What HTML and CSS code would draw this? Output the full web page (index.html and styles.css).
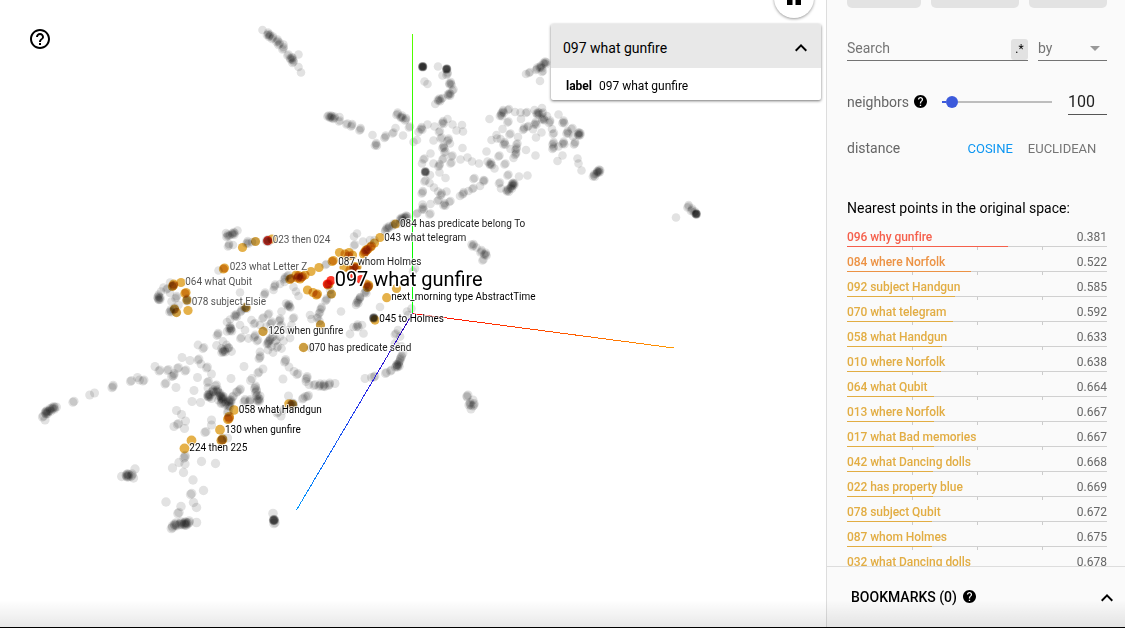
FILE: index.html
```html
<!DOCTYPE html>
<html lang="en">
<head>
<meta charset="utf-8">
<title>Embedding projector</title>
<link rel="stylesheet" href="styles.css">
</head>
<body>
<div class="app">
  <main class="stage">
    <svg class="scatter" id="scatter" width="826" height="628" viewBox="0 0 826 628">
      <defs>
        <linearGradient id="axis-y" x1="0" y1="34" x2="0" y2="313" gradientUnits="userSpaceOnUse"><stop offset="0" stop-color="#5cff00"/><stop offset=".5" stop-color="#0cf500"/><stop offset="1" stop-color="#00ff00"/></linearGradient>
        <linearGradient id="axis-x" x1="412" y1="0" x2="674" y2="0" gradientUnits="userSpaceOnUse"><stop offset="0" stop-color="#ff0000"/><stop offset="1" stop-color="#ff9800"/></linearGradient>
        <linearGradient id="axis-z" x1="0" y1="313" x2="0" y2="510" gradientUnits="userSpaceOnUse"><stop offset="0" stop-color="#3000b0"/><stop offset=".35" stop-color="#2d22e6"/><stop offset="1" stop-color="#0099ff"/></linearGradient>
      </defs>
      <g id="dots" class="dots"></g>
      <g class="axes">
        <path d="M412.5 34V313.5" stroke="url(#axis-y)"/>
        <path d="M412.5 313.5L674 348" stroke="url(#axis-x)"/>
        <path d="M412.5 313.5L296.5 510" stroke="url(#axis-z)"/>
      </g>
      <g id="labels" class="labels"></g>
    </svg>
    <svg class="help-outline" viewBox="0 0 24 24" width="24" height="24"><path d="M11 18h2v-2h-2v2zm1-16C6.48 2 2 6.48 2 12s4.48 10 10 10 10-4.48 10-10S17.52 2 12 2zm0 18c-4.41 0-8-3.59-8-8s3.590-8 8-8 8 3.590 8 8-3.590 8-8 8zm0-14c-2.210 0-4 1.790-4 4h2c0-1.100.900-2 2-2s2 .900 2 2c0 2-3 1.750-3 5h2c0-2.250 3-2.500 3-5 0-2.210-1.790-4-4-4z"/></svg>
    <div class="fab"><svg viewBox="0 0 24 24" width="24" height="24"><path d="M5 4h5.500v15H5zM13.500 4H19v15h-5.500z"/></svg></div>
    <section class="info-card">
      <header class="info-head"><span>097 what gunfire</span><svg viewBox="0 0 24 24" width="24" height="24"><path d="M12 8l-6 6 1.410 1.410L12 10.830l4.590 4.580L18 14z"/></svg></header>
      <div class="info-body"><b>label</b><span>097 what gunfire</span></div>
    </section>
  </main>
  <aside class="panel">
    <div class="content">
      <div class="buttons"><i class="btn b1"></i><i class="btn b2"></i><i class="btn b3"></i></div>
      <div class="search-row">
        <div class="search"><span class="hint">Search</span><span class="regex">.*</span></div>
        <div class="by"><span class="hint">by</span><i class="caret"></i></div>
      </div>
      <div class="neighbors">
        <span class="name">neighbors</span>
        <svg class="help" viewBox="2 2 20 20" width="13" height="13"><path d="M12 2C6.480 2 2 6.480 2 12s4.480 10 10 10 10-4.480 10-10S17.520 2 12 2zm1 17h-2v-2h2v2zm2.070-7.750l-.900.920C13.450 12.900 13 13.500 13 15h-2v-.500c0-1.100.450-2.100 1.170-2.830l1.240-1.260c.370-.360.590-.860.590-1.410 0-1.100-.900-2-2-2s-2 .900-2 2H8c0-2.210 1.790-4 4-4s4 1.790 4 4c0 .880-.360 1.680-.930 2.250z"/></svg>
        <div class="slider"><i class="filled"></i><i class="knob"></i><i class="rest"></i></div>
        <span class="count">100</span>
      </div>
      <div class="distance"><span class="name">distance</span><span class="metric on">COSINE</span><span class="metric">EUCLIDEAN</span></div>
      <h3 class="nearest">Nearest points in the original space:</h3>
      <div class="list" id="list"></div>
    </div>
    <footer class="bookmarks">
      <span>BOOKMARKS (0)</span>
      <svg class="help" viewBox="2 2 20 20" width="13" height="13"><path d="M12 2C6.480 2 2 6.480 2 12s4.480 10 10 10 10-4.480 10-10S17.520 2 12 2zm1 17h-2v-2h2v2zm2.070-7.750l-.900.920C13.450 12.900 13 13.500 13 15h-2v-.500c0-1.100.450-2.100 1.170-2.830l1.240-1.260c.370-.360.590-.860.590-1.410 0-1.100-.900-2-2-2s-2 .900-2 2H8c0-2.210 1.790-4 4-4s4 1.790 4 4c0 .880-.360 1.680-.930 2.250z"/></svg>
      <svg class="expand" viewBox="0 0 24 24" width="24" height="24"><path d="M12 8l-6 6 1.410 1.410L12 10.830l4.590 4.580L18 14z"/></svg>
    </footer>
  </aside>
  <div class="bottom-edge"></div>
</div>
<script src="script.js"></script>
</body>
</html>
```
FILE: styles.css
```css
* { box-sizing: border-box; }
body { margin: 0; font-family: Roboto, "Liberation Sans", sans-serif; color: #000; background: #fff; }
.app { position: relative; display: flex; width: 1125px; height: 628px; overflow: hidden; }
.stage { position: relative; width: 826px; height: 628px; }
.scatter { display: block; }
.dots { isolation: isolate; }
.dots circle { mix-blend-mode: multiply; }
.axes path { fill: none; stroke-width: 1; shape-rendering: crispEdges; }
.labels text { font-size: 10px; fill: #222; stroke: rgba(255, 255, 255, .75); stroke-width: 2px; paint-order: stroke; stroke-linejoin: round; }
.labels .far { fill: #555; }
.labels .near { fill: #000; }
.labels .selected { font-size: 20px; fill: #000; stroke: #fff; stroke-width: 3px; }
.help-outline { position: absolute; left: 28px; top: 27px; }
.fab { position: absolute; left: 774px; top: -22px; width: 40px; height: 40px; padding: 8px; border-radius: 50%; background: #fff; box-shadow: 0 1px 3px rgba(0, 0, 0, .4); }
.fab svg { display: block; }
.info-card { position: absolute; left: 551px; top: 24px; width: 270px; height: 76px; background: #fff; border-radius: 2px; box-shadow: 0 1px 3px rgba(0, 0, 0, .55); }
.info-head { display: flex; align-items: center; justify-content: space-between; height: 44px; padding: 4px 8px 0 12px; background: #e8e8e8; font-size: 14px; border-radius: 2px 2px 0 0; }
.info-body { display: flex; align-items: center; gap: 7px; height: 32px; padding: 3px 15px 0; font-size: 12px; }
.panel { display: flex; flex-direction: column; width: 299px; height: 628px; border-left: 1px solid #ddd; background: #fafafa; }
.content { height: 566px; padding: 0 18px 0 20px; overflow: hidden; color: #666; }
.buttons { display: flex; gap: 10px; height: 8px; }
.btn { background: #e3e3e3; border-radius: 0 0 5px 5px; }
.b1 { width: 74px; }
.b2 { width: 88px; }
.b3 { width: 78px; }
.search-row { display: flex; gap: 10px; margin-top: 29px; font-size: 14px; color: #757575; }
.search { display: flex; justify-content: space-between; align-items: center; width: 181px; height: 24px; border-bottom: 1px solid #737373; }
.hint { padding-bottom: 2px; }
.regex { width: 17px; height: 21px; margin-top: 2px; border-radius: 3px; background: #e2e2e2; color: #000; font-size: 12px; line-height: 20px; text-align: center; }
.by { display: flex; justify-content: space-between; align-items: center; width: 69px; height: 24px; padding-right: 7px; border-bottom: 1px solid #737373; }
.caret { border: 5px solid transparent; border-top-color: #999; border-bottom: 0; }
.neighbors { display: flex; align-items: center; height: 26px; margin-top: 28px; font-size: 14px; }
.neighbors .name { width: 61px; }
.neighbors .help { margin-left: 6px; margin-bottom: 2px; fill: #000; }
.slider { display: flex; align-items: center; width: 110px; margin-left: 15px; }
.filled { width: 4px; height: 2px; background: #3c5adb; }
.knob { width: 12px; height: 12px; border-radius: 50%; background: #3c5adb; }
.rest { flex: 1; height: 2px; background: #bdbdbd; }
.count { width: 39px; height: 26px; margin-left: auto; border-bottom: 1px solid #555; font-size: 16px; line-height: 26px; color: #222; }
.distance { display: flex; align-items: center; height: 20px; margin-top: 23px; font-size: 14px; }
.distance .name { flex: none; width: 120.5px; }
.metric { margin-right: 15px; font-size: 13px; color: #757575; }
.metric:last-child { margin-right: 0; }
.metric.on { color: #0c96f2; }
.nearest { margin: 42px 0 0; font-size: 14px; line-height: 16px; font-weight: 400; color: #000; white-space: nowrap; }
.list { margin-top: 8px; padding-top: 1px; }
.item { height: 25px; }
.item-text { display: flex; justify-content: space-between; height: 21px; padding-top: 4px; font-size: 12px; line-height: 17px; color: #666; }
.item-name { font-weight: 500; letter-spacing: -.05px; }
.bar { height: 1px; background: #d0d0d0; }
.fill { height: 1px; background: currentColor; }
.ticks { display: flex; gap: 64px; height: 3px; padding-left: 65px; }
.ticks i { width: 1px; background: #ccc; }
.c1 { color: #f55f4b; }
.c2 { color: #ec9244; }
.c3 { color: #e2ad43; }
.bookmarks { display: flex; align-items: center; height: 62px; padding: 0 6px 0 24px; border-top: 1px solid #ddd; font-size: 14px; font-weight: 500; }
.bookmarks span { padding-bottom: 2px; }
.bookmarks .help { margin: 0 0 2px 6px; }
.expand { margin-left: auto; }
.bottom-edge { position: absolute; left: 0; right: 0; bottom: 0; height: 28px; background: linear-gradient(rgba(0, 0, 0, 0), rgba(0, 0, 0, .09)); border-bottom: 1px solid #000; pointer-events: none; }
```
FILE: script.js
```js
const NS = "http://www.w3.org/2000/svg";

// Each entry is x,y,overlapping point count (1 when omitted).
const gray = `262.5,30 268,34,4 270,36,3 273,38,3 277.5,41,3 279.5,44,3 283.5,44.5 283.5,48.5,3 288.5,54.5,2 291.5,58.5,6 293.5,62,3 298.5,67 301,72.5 298.5,54.5
328.5,115.5,2 331,117,6 334.5,118,3 339.5,117 340,120.5,2 347.5,123.5,2 352,125.5,3 360.5,129.5,3 372.5,135 376,144.5,4 385.5,137,3 393.5,132.5,2 395.5,128 403,135.5
397.5,114,3 402,117,5 406,119.5,3 410,126.5,2 421.5,128.5,4 418.5,132 413.5,142 417,140 422.7,66.7,14 438,66.5 446.7,69,11 442.5,75.5 447.5,74,3 450.7,83.5,5 449.3,94.5,6 453.5,89.5,2 439.3,100,5 442.5,98,2 435.3,104 424.5,81.5 427.5,84
427.5,124.5 434.5,126.5 443,122.5,4 447.5,119 452.5,124.5 440,131,2 456.5,130.5 462,125 463,131.5 433.5,140.5 441.7,137.5,2 448.5,140,3 443.5,147,4 445.5,151.5,2 450,143.5 462.5,148 443.5,158.5,2 452.5,155.5,2 451.5,162.5,2 460.5,159.5 467.5,157.5 472,161.5 479,163.5 430.5,153.5 424.5,158.5,2 422,163.5 425.3,171.8,9 433.5,163.5 439.5,165.5,3 439.5,172.5 445.5,178 430,175 425.5,180.5,2 429.5,183 434,187.5 438,191.5 441.5,194.5,3 446.5,191.5 422.7,192.5,3 438.5,200,2 444.5,204.5,4 450.5,201,2 423,208.5,4 417.5,213,2 430.5,213.5,2 430.5,204 422.5,204.5 460,196 463.5,193.5,3 468.5,191 473.5,188,2 480,186 484.5,180.5,2 474.5,178,2
489.5,119 501,115,4 503,111.5,4 509,109,2 508.5,121.5,2 515,112 520.5,112.5 527,112,2 534.5,110 538,113.5,6 543,112.5,2 543.5,119,5 550,122,3 558.5,114.5 535.5,123.5,4 521,119 528.5,126,2 524,129,3 533,129.3 541.5,132.5 536,137.5 547,116 563.5,122,4 554,133,2 552,129 567.5,132.5,4 572.5,128,2 579.3,134,8 575,143.5,3 573,136.5 563.5,143,4 553.5,143.5,3 553.5,148,3 558.5,146.5 562.5,155.5 557.5,161 535.5,155.5 526,150 517.5,143.5,2 516.5,149,3 516,154,3 513.5,158 510.5,149 504.5,143.5,4 500.5,139 496.5,135 491.5,140 497,138.5 502.5,129 510.5,133.5,2 518,137 486.5,151.5 499.5,155.5,2 491,164,5 487.5,161.5 505.5,163.5,2 494.5,168.5 483.5,180
508.5,174.5,2 519,176.5 527.5,175.5 500,182.5,2 513.3,184.3,8 508,190.5,5 511,187.5,4 501,188.5 577.5,158.5 578.5,163.5 581.5,170.5 599,171,7 594,175.5,4 597,173,3 676,217.5 688.5,206.5,3 692,210,3 696.3,214,11 695,211.5,2 545,63,6 541,67,5 537,69,3 543,71,2 530,72,2 526,74 542,108 540,81
227.5,236,3 230,235,2 233.5,233.5,6 237.5,230.5 226,233 229,245.5,3 233,245 247.5,242.5,4 252,242 218.5,270.5 170,282.5 163.5,287.5 161,291.5 167.5,288.5,2 159.3,298.5,7 158.5,296,3 170,293 171.5,301.5 176.5,297.5,3 170.5,311,4 178.5,305 241.5,311,3 236,315.5,5 230,319.5 230,327.5,4 227,322
265,294,3 275,286,3 240,292.5 273.5,290 285,278.5,3 288.5,275,2 284.5,282 280,284 293.5,287 296,291.5 298.5,296 326.5,264,2 357,233.5 354,236.5 355,244.5,2 363,241.5 370,240 374.5,240 386.5,229,3 389,227.5,3 385,231.5 393.5,225,3 401.5,219,6 406,217,6 404,222,4 400,223.5
330,290 326.5,300,3 321.5,308.5,3 320,312.5,2 318,317,2 319.5,321 360,297.5 365.5,292,4 360,298.5,3 357.5,302,4 356,305 341,311.5 380,307 357.5,326,4 353.5,327 350,334 363.5,333.5 362,325 289,305.5,5 286,303.5 290.5,307.5 294,317.5,2 311.5,319 310,315 281.5,311.5 269,313.5,2 263.5,317.5,2 280,320,3 281.5,325,2 271.5,323,3 266.5,326.5 255,323,2 251.5,320 260,325 240,325 245,330 231,330,4 227,331.5 241.5,337.5,2 248.5,338.5 255,336.5,3 258,340,2 268,343,4 270,340,3 273,336.5,2 276.5,340,2 280,336.5 283.5,341 271.5,346.5 278,346.5,2 268,350 273,352.5 281.5,348.5 288.5,330 290,338 291.5,325 273,331.5
221.5,348.5 224.5,351,4 229,348 223,341.5 226.5,345 231.5,351.5 260,357.5,3 260,352 244,366.5 263,369 259,372,2 252,378.5 231,378.5 311,348 285.5,361,3 289,367 298,373.5,2 294,371.5 307,378,3 306,381.5 309,384.5 315,384.5,2 320,385.3,3 324,385.5,4 329.5,384.5,3 335,383.5 283,379 398.5,365,5 396.5,366,4 401.5,357,3 400,361,3 403,353.5 391.5,370,2 386.5,372.5,2 375,376,2 371.5,377.5 365,378.5 396,333.5,2 400,336.5 395,343.5 401.5,346.5 398,330 407,311.5 408,315 411.5,308.5 413,271.5 415,268.5 288.5,396 303.5,398,2 308.5,395.5,2 305.5,396.5 278,412,2 281,416 283.5,410
209,395.7,8 213,391,4 217.5,391,5 216.5,385,2 208.5,381.5,2 208,388 222.5,397.5,7 220,395,4 222.5,401.5,3 230,401,6 229,405,4 226,403.5,3 221,403.5 218.5,400 211.5,398.5 233.5,396,2 237.5,391.5,2 240.5,389,2 245,401,3 250,401,3 258.5,400,6 255.5,387.5,3 256.5,391.5,3 257.5,395,2 260,396 250.5,380.5 218,334.5,3 198,345 204,347.5,2 216.5,345.5 222.7,351.5,3 228.5,347.5,2 182,357.5 190,360.5 199,359,2 201,364 207.5,367,2 211.5,374 197.5,377.5 155,366.5 160,370,2 168.5,369.5,2 178.5,367.5,2 174,375,3 171.5,376.5 186,370,2 166,383,2 176,387.5 194,390.5 192,401.5 200.5,402.5 176.5,410.5 181.5,414.5 185.5,421 178.5,423.5,2 174,426.5 184.5,428.5 211.5,420 211.5,425 206,431.5,2 228.5,411.5,2 227.5,438 185,457,3 179,462.5 185,464 172.5,468 201.5,461.5 215.5,463.5 183.5,472.5 193,480 191.7,493.5,2 203.5,490.5 166,502 193.5,502.5 196.5,507.5 181,506.5 179,512.5,2 172.5,527.5,3 176,524.5,5 181,523.5,4 185.5,523.7,8 189,522.5,3 196.5,522.5 274,520,10 273,513.5 275,522.5,2
45,420 43.5,416,2 46.7,412.5,8 50,410,4 53.5,408,6 56.5,407 74,401.3,2 89.7,395 94.5,393 113,386.7,3 131.5,380.5,2 137.5,377.5 144,380,2 139.5,380 121.7,476.5 127.7,475.5,8 132,475.5,3 135,469 133.5,478 468,395,2 470,404,4 474,405,3 467,397 473,400 471,409 473.5,245.5,3 471.5,244.5 476.5,247.5 481.5,251.5,3 485.7,254.3,5 483.5,259.5,2
255.5,241.5 187,300,4 174.5,309,3 176.5,312.5 246,307.5,5 291,278.5 395.5,224 331.5,294,2 320.5,325 368.5,286.5 373.7,318,11 263,331.5 303.5,347.5 292.3,404.5,6 222.5,439.5,3 173.5,285.5,2 267.7,240.7,5`;
const orange = `242.5,247.5 255.5,241.5 272,239 224.5,268,2 173.5,285.5,3 181,282.5 186,292.5,2 187,300 174.5,309 176.5,312.5 188,310.5 246,307.5 291,278.5,2 298.5,277,3 302.5,276.5,2 296,275 300,279 305,275 311,271.5 319,267.5 333.3,260.5,2 339.5,252.5 345,254 349,252.5 352.5,255 348.5,256 344,267.5 354,268,3 357,267,2 350,270 365.7,251.5,3 363.5,254 368,249,2 371.5,246,2 374.5,243 380,237.5 395.5,224 329,284,2 307.5,290 313,292.5 317.5,294,2 331.5,294 320.5,325 368.5,286.5,3 366,284 396.5,288.5 386.7,297.7 375,320 263,331.5 303.5,347.5 292.3,404.5 289,404 234,410 229,418.3,3 220,429.7 222.5,439.5,2 191.5,440.5 184.5,448.5`;
const red = `327.3,284 331,280.5 361,279.5 352,277 267.7,240.7`;

const dots = document.getElementById("dots");
function plot(source, fill, radius) {
  source.trim().split(/\s+/).forEach((entry) => {
    const [x, y, n = 1] = entry.split(",").map(Number);
    for (let i = 0; i < n; i++) {
      const spread = !i ? 0 : n > 8 ? 0.8 : 1.5;
      const c = document.createElementNS(NS, "circle");
      c.setAttribute("cx", x + spread * Math.cos(i * 2.4));
      c.setAttribute("cy", y + spread * Math.sin(i * 2.4));
      c.setAttribute("r", radius - (n > 8 ? 0.4 : 0) + Math.max(0, y - 300) / 450);
      c.setAttribute("fill", fill);
      dots.append(c);
    }
  });
}
plot(gray, "#e2e2e2", 4.3);
plot(orange, "#e5b14a", 4.6);
plot(red, "#ff3a2c", 4.6);

// x, baseline, width, text, class
const labels = [
  [272.7, 243.3, 57.6, "023 then 024", "far"],
  [229.7, 270.3, 77.6, "023 what Letter Z", "far"],
  [185.3, 285.3, 66.7, "064 what Qubit", "far"],
  [191.7, 305.3, 74.3, "078 subject Elsie", "far"],
  [400, 227.3, 125.3, "084 has predicate belong To", ""],
  [384.3, 241.3, 82, "043 what telegram", ""],
  [338.3, 265.3, 83, "087 whom Holmes", ""],
  [268.3, 334.3, 75, "126 when gunfire", ""],
  [309, 351.3, 102.3, "070 has predicate send", ""],
  [391.3, 300.3, 144.3, "next_morning type AbstractTime", "near"],
  [379.3, 322.3, 64.7, "045 to Holmes", "near"],
  [238.7, 413.3, 83, "058 what Handgun", "near"],
  [225, 433.3, 75.7, "130 when gunfire", "near"],
  [189.3, 451.3, 58, "224 then 225", "near"],
  [334.7, 286, 148, "097 what gunfire", "selected"]
];
const labelLayer = document.getElementById("labels");
labels.forEach(([x, y, w, text, cls]) => {
  const t = document.createElementNS(NS, "text");
  t.setAttribute("x", x);
  t.setAttribute("y", y);
  t.setAttribute("textLength", w);
  t.setAttribute("class", cls);
  t.textContent = text;
  labelLayer.append(t);
});

const items = [
  ["096 why gunfire", "0.381"], ["084 where Norfolk", "0.522"], ["092 subject Handgun", "0.585"],
  ["070 what telegram", "0.592"], ["058 what Handgun", "0.633"], ["010 where Norfolk", "0.638"],
  ["064 what Qubit", "0.664"], ["013 where Norfolk", "0.667"], ["017 what Bad memories", "0.667"],
  ["042 what Dancing dolls", "0.668"], ["022 has property blue", "0.669"], ["078 subject Qubit", "0.672"],
  ["087 whom Holmes", "0.675"], ["032 what Dancing dolls", "0.678"]
];
document.getElementById("list").innerHTML = items.map(([name, d], i) => {
  const cls = i === 0 ? "c1" : i === 1 ? "c2" : "c3";
  return `<div class="item"><div class="item-text"><span class="item-name ${cls}">${name}</span><span>${d}</span></div>` +
    `<div class="bar"><div class="fill ${cls}" style="width:${((1 - d) * 100).toFixed(1)}%"></div></div>` +
    `<div class="ticks"><i></i><i></i><i></i></div></div>`;
}).join("");
```
